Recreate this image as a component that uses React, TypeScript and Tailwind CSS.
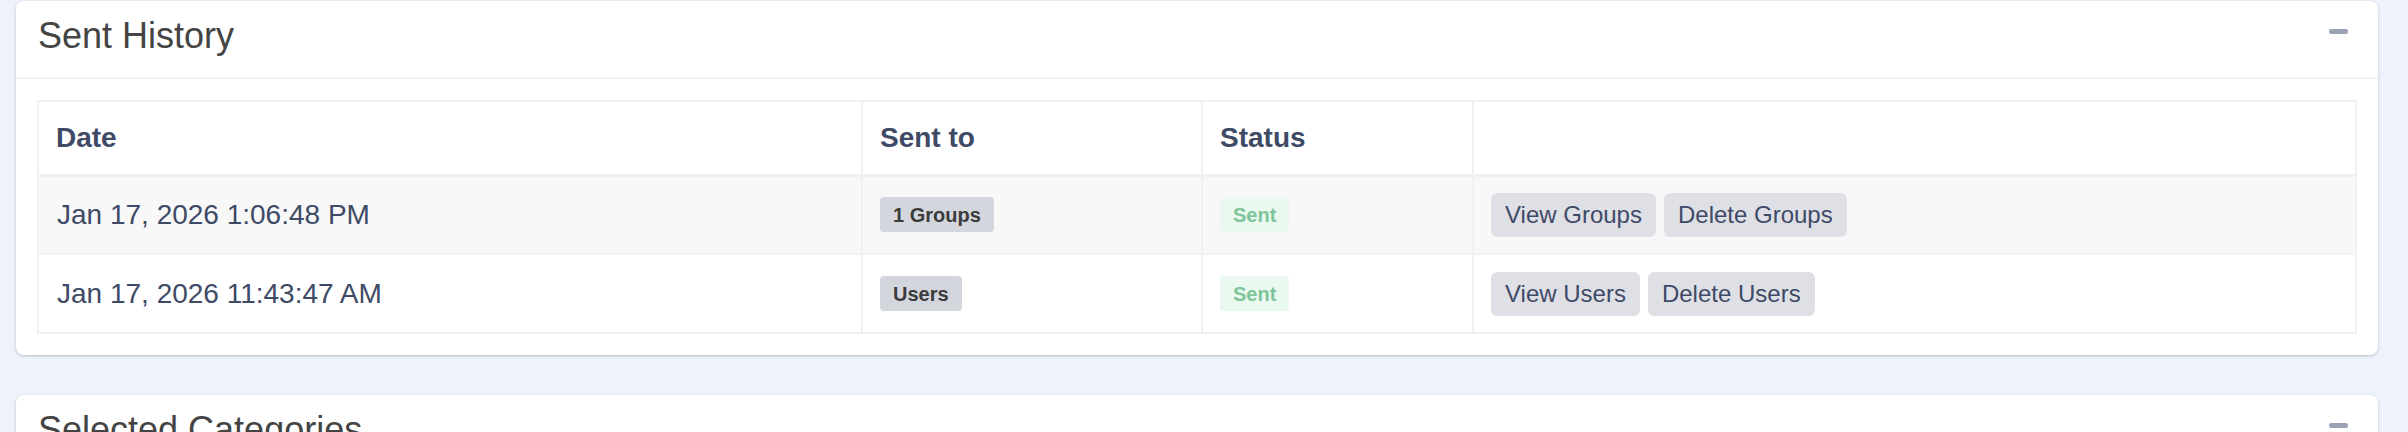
const rows = [
  {
    date: 'Jan 17, 2026 1:06:48 PM',
    sentTo: '1 Groups',
    status: 'Sent',
    actions: ['View Groups', 'Delete Groups'],
  },
  {
    date: 'Jan 17, 2026 11:43:47 AM',
    sentTo: 'Users',
    status: 'Sent',
    actions: ['View Users', 'Delete Users'],
  },
]

function Card({ title, children }: { title: string; children?: React.ReactNode }) {
  return (
    <div className="rounded-lg bg-white shadow-[0_1px_3px_rgba(60,70,90,0.3)]">
      <div className="flex h-[78px] items-start justify-between border-b-2 border-[#f1f1f1] pl-[22px] pr-[30px]">
        <h2 className="mt-[14px] text-[36px] leading-[42px] font-normal text-[#444]">{title}</h2>
        <span className="mt-[28px] block h-[5px] w-[19px] rounded-[2px] bg-[#9ba3b4]" />
      </div>
      {children}
    </div>
  )
}

export default function App() {
  return (
    <div className="min-h-screen bg-[#eef3fb] pt-px pl-4 pr-[30px] font-['Liberation_Sans',Arial,sans-serif]">
      <Card title="Sent History">
        <div className="p-[21px]">
          <table className="w-full table-fixed border-collapse border-2 border-[#f1f1f1] text-left text-[#3e4a66]">
            <colgroup>
              <col className="w-[824px]" />
              <col className="w-[340px]" />
              <col className="w-[271px]" />
              <col />
            </colgroup>
            <thead>
              <tr className="h-[74px]">
                {['Date', 'Sent to', 'Status', ''].map((h, i) => (
                  <th
                    key={i}
                    className="border-2 border-b-[3px] border-[#f1f1f1] px-[17px] text-[28px] font-bold"
                  >
                    {h}
                  </th>
                ))}
              </tr>
            </thead>
            <tbody>
              {rows.map((r, i) => (
                <tr key={r.date} className={`h-[79px] ${i % 2 === 0 ? 'bg-[#f8f8f8]' : 'bg-white'}`}>
                  <td className="border-2 border-[#f1f1f1] px-[18px] text-[28px]">{r.date}</td>
                  <td className="border-2 border-[#f1f1f1] px-[17px]">
                    <span className="inline-flex h-[35px] items-center rounded-[4px] bg-[#d4d6de] px-[13px] text-[20px] font-bold text-[#3b3b3b]">
                      {r.sentTo}
                    </span>
                  </td>
                  <td className="border-2 border-[#f1f1f1] px-[17px]">
                    <span className="inline-flex h-[35px] items-center rounded-[4px] bg-[#e9f9ef] px-[13px] text-[20px] font-bold text-[#7ec49a]">
                      {r.status}
                    </span>
                  </td>
                  <td className="border-2 border-[#f1f1f1] px-[17px]">
                    <div className="flex gap-2">
                      {r.actions.map((a) => (
                        <button
                          key={a}
                          className="h-[44px] rounded-[6px] bg-[#dfe0e6] px-[14px] text-[24px] text-[#3e4a66]"
                        >
                          {a}
                        </button>
                      ))}
                    </div>
                  </td>
                </tr>
              ))}
            </tbody>
          </table>
        </div>
      </Card>
      <div className="mt-10">
        <Card title="Selected Categories">
          <div className="h-[200px]" />
        </Card>
      </div>
    </div>
  )
}
